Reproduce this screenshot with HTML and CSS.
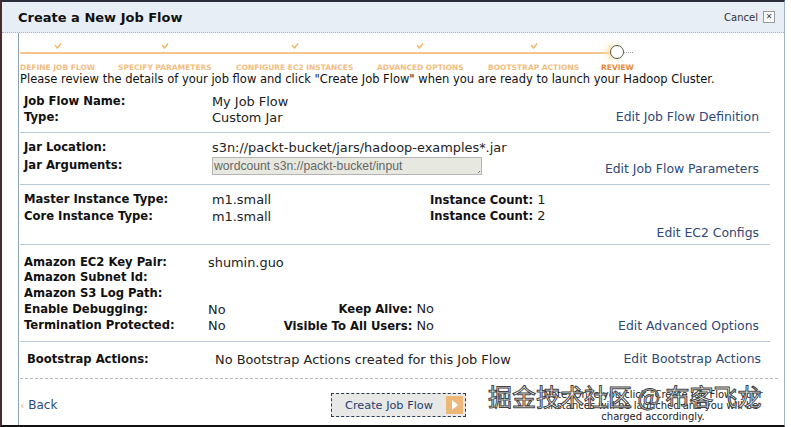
FILE: index.html
```html
<!DOCTYPE html>
<html lang="en">
<head>
  <meta charset="UTF-8">
  <title>Create a New Job Flow</title>
  <link rel="stylesheet" href="styles.css">
</head>
<body>

  <div class="dialog">
    <div class="header">
      <h1>Create a New Job Flow</h1>
      <a class="cancel" href="#">Cancel <span class="close">&#x2715;</span></a>
    </div>

    <div class="content">
      <div class="steps">
        <div class="step done"><svg class="tick" width="8" height="6" viewBox="0 0 8 6"><polyline points="1,2 3.5,5 7,0.5"/></svg><span class="name">DEFINE JOB FLOW</span></div>
        <div class="step done"><svg class="tick" width="8" height="6" viewBox="0 0 8 6"><polyline points="1,2 3.5,5 7,0.5"/></svg><span class="name">SPECIFY PARAMETERS</span></div>
        <div class="step done"><svg class="tick" width="8" height="6" viewBox="0 0 8 6"><polyline points="1,2 3.5,5 7,0.5"/></svg><span class="name">CONFIGURE EC2 INSTANCES</span></div>
        <div class="step done"><svg class="tick" width="8" height="6" viewBox="0 0 8 6"><polyline points="1,2 3.5,5 7,0.5"/></svg><span class="name">ADVANCED OPTIONS</span></div>
        <div class="step done"><svg class="tick" width="8" height="6" viewBox="0 0 8 6"><polyline points="1,2 3.5,5 7,0.5"/></svg><span class="name">BOOTSTRAP ACTIONS</span></div>
        <div class="step current"><span class="dot"></span><span class="name">REVIEW</span></div>
      </div>

      <p class="intro">Please review the details of your job flow and click "Create Job Flow" when you are ready to launch your Hadoop Cluster.</p>

      <div class="section">
        <div class="fields">
          <span class="label">Job Flow Name:</span><span class="value">My Job Flow</span>
          <span class="label">Type:</span><span class="value">Custom Jar</span>
        </div>
        <a class="edit" href="#">Edit Job Flow Definition</a>
      </div>

      <div class="section">
        <div class="fields">
          <span class="label">Jar Location:</span><span class="value">s3n://packt-bucket/jars/hadoop-examples*.jar</span>
          <span class="label">Jar Arguments:</span><span class="value"><span class="args">wordcount s3n://packt-bucket/input</span></span>
        </div>
        <a class="edit" href="#">Edit Job Flow Parameters</a>
      </div>

      <div class="section stacked">
        <div class="fields ec2">
          <span class="label">Master Instance Type:</span><span class="value">m1.small</span><span class="count"><b>Instance Count:</b> 1</span>
          <span class="label">Core Instance Type:</span><span class="value">m1.small</span><span class="count"><b>Instance Count:</b> 2</span>
        </div>
        <a class="edit" href="#">Edit EC2 Configs</a>
      </div>

      <div class="section options">
        <div class="fields advanced">
          <span class="label">Amazon EC2 Key Pair:</span><span class="value">shumin.guo</span><span></span>
          <span class="label">Amazon Subnet Id:</span><span class="value"></span><span></span>
          <span class="label">Amazon S3 Log Path:</span><span class="value"></span><span></span>
          <span class="label">Enable Debugging:</span><span class="value">No</span><span class="pair"><b>Keep Alive:</b> No</span>
          <span class="label">Termination Protected:</span><span class="value">No</span><span class="pair"><b>Visible To All Users:</b> No</span>
        </div>
        <a class="edit" href="#">Edit Advanced Options</a>
      </div>

      <div class="section last">
        <div class="fields bootstrap">
          <span class="label">Bootstrap Actions:</span><span class="value">No Bootstrap Actions created for this Job Flow</span>
        </div>
        <a class="edit" href="#">Edit Bootstrap Actions</a>
      </div>

      <div class="footer">
        <a class="back" href="#"><span class="arrow">&lsaquo;</span> Back</a>
        <button class="create" type="button">Create Job Flow <span class="go"></span></button>
        <p class="note">Note: Once you click "Create Job Flow" your instances will be launched and you will be charged accordingly.</p>
        <div class="watermark">掘金技术社区 @ 布客飞龙</div>
      </div>
    </div>
  </div>

</body>
</html>
```

FILE: styles.css
```css
* {
  box-sizing: border-box;
  margin: 0;
  padding: 0;
}

body {
  font-family: "DejaVu Sans", Verdana, sans-serif;
  background: #fff;
  width: 791px;
  height: 427px;
  overflow: hidden;
}

a {
  text-decoration: none;
}

.dialog {
  width: 785px;
  height: 427px;
  border-top: 2px solid #2b2d3a;
  border-left: 2px solid #4b2a2e;
  border-bottom: 2px solid #111;
  border-right: 1px solid #9fb0be;
  display: flex;
  flex-direction: column;
}

.header {
  height: 31px;
  flex-shrink: 0;
  background: #e7eef6;
  border-bottom: 1px dotted #a9b4c0;
  display: flex;
  align-items: center;
  justify-content: space-between;
  padding: 0 9px 0 16px;
}

.header h1 {
  font-size: 13px;
  font-weight: bold;
  color: #111;
}

.cancel {
  font-size: 10px;
  color: #333;
  display: flex;
  align-items: center;
  gap: 5px;
}

.close {
  width: 12px;
  height: 12px;
  border: 1px solid #9a9a9a;
  background: #fff;
  font-size: 8px;
  line-height: 10px;
  text-align: center;
  color: #444;
}

.content {
  flex: 1;
  margin-left: 16px;
  border-left: 1px solid #8ea3b6;
  padding-left: 1px;
}

/* wizard progress */
.steps {
  display: grid;
  grid-template-columns: 98px 118px 141px 111px 113px auto;
  padding-top: 10px;
  height: 40px;
  background: linear-gradient(#f4c48c, #f4c48c) no-repeat 0 19px / 592px 2px;
}

.step {
  justify-self: start;
  display: flex;
  flex-direction: column;
  align-items: center;
}

.tick {
  height: 6px;
  margin-bottom: 14px;
  fill: none;
  stroke: #efb56e;
  stroke-width: 1.4;
}

.name {
  font-size: 7.5px;
  font-weight: bold;
  color: #f3bd80;
}

.current .name {
  color: #e38a3a;
}

.dot {
  width: 14px;
  height: 14px;
  border: 1px solid #555;
  border-radius: 50%;
  background: #fff;
  margin-top: 2px;
  margin-bottom: 4px;
  position: relative;
  box-shadow: -4px 0 6px #fbe3a0;
}

.dot::after {
  content: "";
  position: absolute;
  left: 13px;
  top: 6px;
  width: 9px;
  border-top: 1px dotted #999;
}

.intro {
  font-size: 11.5px;
  color: #111;
  line-height: 13px;
  height: 14px;
  white-space: nowrap;
}

/* review sections */
.section {
  display: flex;
  justify-content: space-between;
  align-items: flex-end;
  margin-right: 14px;
  padding: 7px 11px 7px 4px;
  border-bottom: 1px solid #b9cad7;
}

.section.stacked {
  flex-direction: column;
  align-items: stretch;
  padding-bottom: 3px;
}

.section.stacked .edit {
  align-self: flex-end;
}

.section.options {
  padding-top: 10px;
}

.section.last {
  border-bottom: none;
  padding: 9px 9px 11px 7px;
}

.fields {
  display: grid;
  grid-template-columns: 188px auto;
  align-items: center;
}

.fields.ec2 {
  grid-template-columns: 188px 218px auto;
}

.fields.advanced {
  grid-template-columns: 184px 68px 158px;
}

.label {
  font-size: 11.6px;
  font-weight: bold;
  line-height: 15.5px;
  color: #111;
}

.value,
.count,
.pair {
  font-size: 12.9px;
  line-height: 15.5px;
  color: #222;
}

.count b,
.pair b {
  font-size: 11.6px;
  color: #111;
}

.pair {
  text-align: right;
  white-space: nowrap;
}

.args {
  display: block;
  width: 270px;
  height: 18px;
  margin: 1px 0 2px;
  border: 1px solid #b4b4b4;
  background: #e7e9e1 linear-gradient(135deg, transparent 11px, #777 11px, #777 12px, transparent 12px, transparent 14px, #777 14px, #777 15px, transparent 15px) no-repeat right 1px bottom 1px / 9px 9px;
  font-family: "Liberation Sans", Arial, sans-serif;
  font-size: 12.2px;
  line-height: 16px;
  color: #666;
  padding-left: 1px;
}

.edit {
  font-size: 12.4px;
  color: #2e4876;
  line-height: 16px;
  white-space: nowrap;
}

/* bottom bar */
.footer {
  border-top: 1px dashed #bbb;
  margin-right: 6px;
  height: 47px;
  display: flex;
  align-items: center;
  position: relative;
  padding-top: 6px;
}

.back {
  font-size: 12px;
  color: #2e4876;
  width: 311px;
}

.arrow {
  color: #efa96a;
  font-size: 11px;
}

.create {
  width: 135px;
  height: 24px;
  border: 1px dashed #2e3a55;
  background: #e8e8e6;
  font-family: "DejaVu Sans", Verdana, sans-serif;
  font-size: 11.3px;
  color: #233f6e;
  display: flex;
  align-items: center;
  justify-content: space-between;
  padding: 0 2px 0 13px;
}

.go {
  width: 17px;
  height: 18px;
  background: #efb777;
  position: relative;
}

.go::after {
  content: "";
  position: absolute;
  left: 6px;
  top: 4px;
  border-left: 6px solid #fff;
  border-top: 5px solid transparent;
  border-bottom: 5px solid transparent;
}

.note {
  flex: 1;
  text-align: center;
  font-size: 10px;
  line-height: 11px;
  color: #222;
  padding: 0 8px 0 70px;
}

.watermark {
  position: absolute;
  left: 468px;
  top: 5px;
  font-family: "Noto Sans CJK SC", sans-serif;
  font-size: 24px;
  line-height: 1;
  color: #fff;
  -webkit-text-stroke: 1px #444;
  white-space: nowrap;
}
```
